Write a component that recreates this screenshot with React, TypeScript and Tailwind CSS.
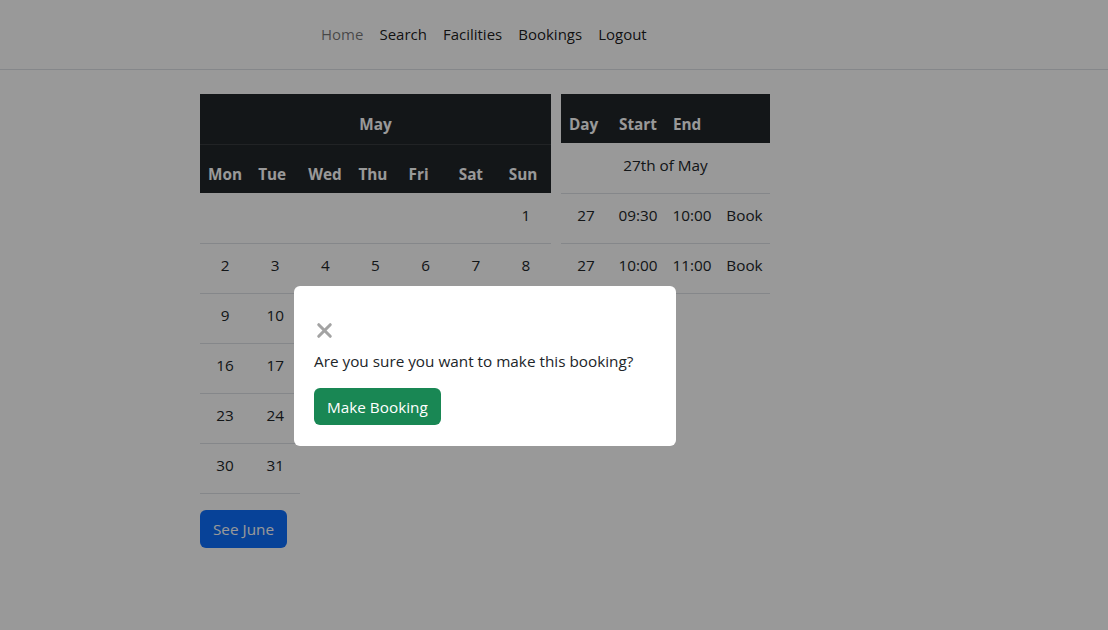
import { X } from "lucide-react";

const weeks: (number | null)[][] = [
  [null, null, null, null, null, null, 1],
  [2, 3, 4, 5, 6, 7, 8],
  [9, 10, 11, 12, 13, 14, 15],
  [16, 17, 18, 19, 20, 21, 22],
  [23, 24, 25, 26, 27, 28, 29],
  [30, 31],
];

const days = ["Mon", "Tue", "Wed", "Thu", "Fri", "Sat", "Sun"];

const slots = [
  { day: 27, start: "09:30", end: "10:00" },
  { day: 27, start: "10:00", end: "11:00" },
];

const navLinks = ["Home", "Search", "Facilities", "Bookings", "Logout"];

export default function App() {
  return (
    <div className="relative min-h-[630px] bg-white font-['Open_Sans',sans-serif] text-[15.3px] leading-6 text-[#212529]">
      <nav className="flex h-[70px] items-center border-b border-[#dee2e6] pb-[2px] pl-[313px] text-[15px]">
        {navLinks.map((link, i) => (
          <a
            key={link}
            className={`px-2 ${i === 0 ? "text-black/55" : "text-black/90"}`}
          >
            {link}
          </a>
        ))}
      </nav>

      <main className="flex items-start gap-[10px] pl-[200px] pt-6">
        <div className="flex flex-col">
          <table className="w-[351px] table-fixed border-collapse">
            <thead className="bg-[#212529] font-bold text-white">
              <tr className="border-b border-[#373b3e]">
                <th colSpan={7} className="h-[50px] px-2 pb-[8px] pt-0 text-center align-bottom">
                  May
                </th>
              </tr>
              <tr>
                {days.map((d) => (
                  <th key={d} className="h-[49px] px-2 pb-[7px] text-left align-bottom">
                    {d}
                  </th>
                ))}
              </tr>
            </thead>
            <tbody>
              {weeks.map((week, wi) => (
                <tr key={wi}>
                  {week.map((n, di) => (
                    <td key={di} className="h-[50px] border-b border-[#dee2e6] pb-[6px] text-center">
                      {n}
                    </td>
                  ))}
                </tr>
              ))}
            </tbody>
          </table>
          <button className="mt-4 h-[38px] w-[87px] rounded-md bg-[#0d6efd] text-white">
            See June
          </button>
        </div>

        <table className="w-[209px] border-collapse">
          <thead className="bg-[#212529] font-bold text-white">
            <tr>
              <th className="h-[49px] w-[50px] px-2 pb-[7px] text-left align-bottom">Day</th>
              <th className="h-[49px] w-[54px] px-2 pb-[7px] text-left align-bottom">Start</th>
              <th className="h-[49px] w-[54px] px-2 pb-[7px] text-left align-bottom">End</th>
              <th className="h-[49px] w-[51px]"></th>
            </tr>
          </thead>
          <tbody>
            <tr>
              <td colSpan={4} className="h-[50px] border-b border-[#dee2e6] pb-[6px] text-center">
                27th of May
              </td>
            </tr>
            {slots.map((s, i) => (
              <tr key={i}>
                <td className="h-[50px] border-b border-[#dee2e6] pb-[6px] text-center">{s.day}</td>
                <td className="h-[50px] border-b border-[#dee2e6] pb-[6px] text-center">{s.start}</td>
                <td className="h-[50px] border-b border-[#dee2e6] pb-[6px] text-center">{s.end}</td>
                <td className="h-[50px] border-b border-[#dee2e6] pb-[6px] text-center">Book</td>
              </tr>
            ))}
          </tbody>
        </table>
      </main>

      {/* backdrop + confirm dialog */}
      <div className="absolute inset-0 bg-black/40" />
      <div className="absolute left-[294px] top-[286px] flex h-[160px] w-[382px] flex-col items-start rounded-md bg-white px-5 pt-[36px]">
        <button className="text-[#a3a3a3]">
          <X size={23} strokeWidth={3.2} className="-my-[3px] -ml-[1px]" />
        </button>
        <p className="mt-[10px]">Are you sure you want to make this booking?</p>
        <button className="mt-[15px] h-[37px] rounded-md bg-[#198754] px-[13px] text-white">
          Make Booking
        </button>
      </div>
    </div>
  );
}
